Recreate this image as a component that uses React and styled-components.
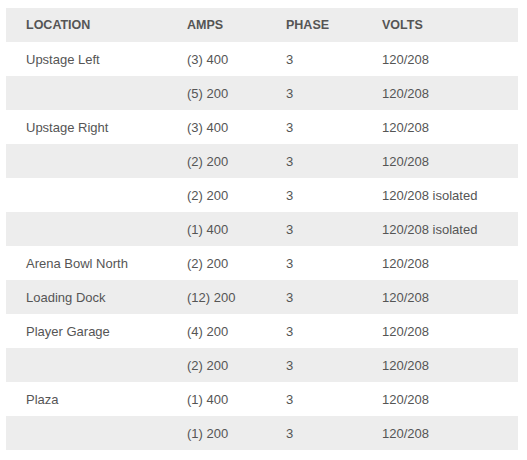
import React from 'react';
import styled, { createGlobalStyle } from 'styled-components';

const rows = [
    { location: 'Upstage Left', amps: '(3) 400', phase: '3', volts: '120/208' },
    { location: '', amps: '(5) 200', phase: '3', volts: '120/208' },
    { location: 'Upstage Right', amps: '(3) 400', phase: '3', volts: '120/208' },
    { location: '', amps: '(2) 200', phase: '3', volts: '120/208' },
    { location: '', amps: '(2) 200', phase: '3', volts: '120/208 isolated' },
    { location: '', amps: '(1) 400', phase: '3', volts: '120/208 isolated' },
    { location: 'Arena Bowl North', amps: '(2) 200', phase: '3', volts: '120/208' },
    { location: 'Loading Dock', amps: '(12) 200', phase: '3', volts: '120/208' },
    { location: 'Player Garage', amps: '(4) 200', phase: '3', volts: '120/208' },
    { location: '', amps: '(2) 200', phase: '3', volts: '120/208' },
    { location: 'Plaza', amps: '(1) 400', phase: '3', volts: '120/208' },
    { location: '', amps: '(1) 200', phase: '3', volts: '120/208' },
];

const App = () => {
    return (
        <>
            <GlobalStyle />
            <Wrapper>
                <Table>
                    <colgroup>
                        <col style={{ width: 161 }} />
                        <col style={{ width: 99 }} />
                        <col style={{ width: 96 }} />
                        <col />
                    </colgroup>
                    <thead>
                        <HeadRow>
                            <HeadCell>Location</HeadCell>
                            <HeadCell>Amps</HeadCell>
                            <HeadCell>Phase</HeadCell>
                            <HeadCell>Volts</HeadCell>
                        </HeadRow>
                    </thead>
                    <tbody>
                        {rows.map((row, i) => (
                            <Row key={i} striped={i % 2 === 1}>
                                <Cell>{row.location}</Cell>
                                <Cell>{row.amps}</Cell>
                                <Cell>{row.phase}</Cell>
                                <Cell>{row.volts}</Cell>
                            </Row>
                        ))}
                    </tbody>
                </Table>
            </Wrapper>
        </>
    );
};

const GlobalStyle = createGlobalStyle`
    body {
        margin: 0;
        background: #fff;
        font-family: "Liberation Sans", Arial, sans-serif;
    }
`;

const Wrapper = styled.div`
    padding: 8px 9px 0 6px;
`;

const Table = styled.table`
    width: 512px;
    border-collapse: collapse;
    table-layout: fixed;
    color: #555;
    font-size: 13px;
`;

const HeadRow = styled.tr`
    background: #ededed;
    height: 34px;
`;

const HeadCell = styled.th`
    text-align: left;
    padding: 0 0 0 20px;
    font-size: 12.5px;
    font-weight: bold;
    text-transform: uppercase;
    color: #555;
`;

const Row = styled.tr.withConfig({ shouldForwardProp: (p) => p !== 'striped' })`
    height: 34px;
    background: ${props => props.striped ? '#ededed' : '#fff'};
`;

const Cell = styled.td`
    padding: 0 0 0 20px;
    vertical-align: middle;
    white-space: nowrap;
`;

export default App;
